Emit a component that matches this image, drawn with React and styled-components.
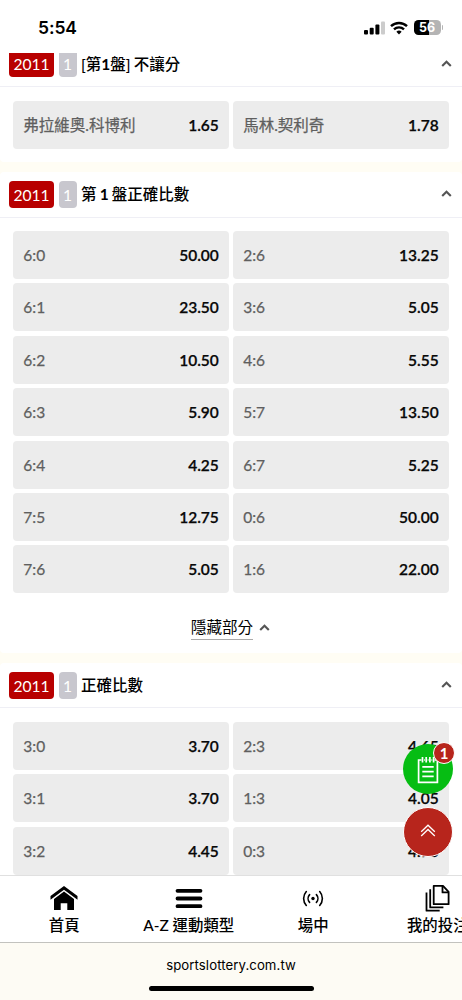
import React from 'react'
import styled, { createGlobalStyle } from 'styled-components'

const GlobalStyle = createGlobalStyle`
  * {
    box-sizing: border-box;
  }
  body {
    margin: 0;
    background: #fff;
    font-family: Lato, 'Noto Sans CJK TC', sans-serif;
    font-size: 15.6px;
    color: #000;
  }
`

const markets = [
  {
    title: '[第1盤] 不讓分',
    odds: [
      ['弗拉維奧.科博利', '1.65'], ['馬林.契利奇', '1.78']
    ]
  },
  {
    title: '第 1 盤正確比數',
    collapsible: true,
    odds: [
      ['6:0', '50.00'], ['2:6', '13.25'],
      ['6:1', '23.50'], ['3:6', '5.05'],
      ['6:2', '10.50'], ['4:6', '5.55'],
      ['6:3', '5.90'], ['5:7', '13.50'],
      ['6:4', '4.25'], ['6:7', '5.25'],
      ['7:5', '12.75'], ['0:6', '50.00'],
      ['7:6', '5.05'], ['1:6', '22.00']
    ]
  },
  {
    title: '正確比數',
    odds: [
      ['3:0', '3.70'], ['2:3', '4.65'],
      ['3:1', '3.70'], ['1:3', '4.05'],
      ['3:2', '4.45'], ['0:3', '4.70']
    ]
  }
]

const Screen = styled.div`
  position: relative;
  display: flex;
  flex-direction: column;
  width: 462px;
  height: 1000px;
  overflow: hidden;
`

const StatusBar = styled.header`
  display: flex;
  flex: none;
  justify-content: space-between;
  align-items: flex-start;
  height: 53px;
  padding: 18px 19px 0 38px;
`

const Clock = styled.span`
  font: 600 17.5px/20px Inter, sans-serif;
  letter-spacing: -0.1px;
`

const StatusIcons = styled.div`
  display: flex;
  align-items: center;
  gap: 5px;
  height: 19px;
`

const Battery = styled.div`
  display: flex;
  align-items: center;
  gap: 1px;
  margin-left: 1px;
  &:after {
    content: '';
    width: 1.5px;
    height: 5px;
    border-radius: 0 2px 2px 0;
    background: #b4b4b4;
  }
`

const BatteryLevel = styled.div`
  width: 27px;
  height: 15px;
  border-radius: 4.5px;
  background: linear-gradient(90deg, #000 56%, #b4b4b4 56%);
  color: #fff;
  font: 700 12.5px/15px Inter, sans-serif;
  text-align: center;
`

const Markets = styled.main`
  flex: 1;
  min-height: 0;
  overflow: hidden;
  background: #fffdf4;
`

const List = styled.div`
  display: flex;
  flex-direction: column;
  gap: 10px;
  margin-top: -11.5px;
`

const Section = styled.section`
  border-radius: 4px;
  background: #fff;
`

const SectionHead = styled.div`
  display: flex;
  align-items: center;
  height: 45.5px;
  padding: 0 10px 0 9px;
  border-bottom: 1px solid #efeff5;
`

const Badge = styled.span`
  width: ${({ $muted }) => ($muted ? 18 : 45)}px;
  height: 27px;
  margin-right: 4.5px;
  border-radius: 4px;
  background: ${({ $muted }) => ($muted ? '#c8c7ce' : '#b80000')};
  color: #fff;
  line-height: 28px;
  text-align: center;
`

const Title = styled.h2`
  flex: 1;
  margin: 0;
  font-size: 15.5px;
  font-weight: 500;
  line-height: 24px;
  word-spacing: -0.8px;
  & b {
    font-weight: 700;
  }
`

const OddsGrid = styled.div`
  display: grid;
  grid-template-columns: 1fr 1fr;
  gap: 4.4px;
  padding: 13.5px 13.3px;
`

const Odd = styled.button`
  display: flex;
  justify-content: space-between;
  align-items: center;
  height: 48px;
  padding: 0 10px;
  border: 0;
  border-radius: 4px;
  background: #ececec;
  color: #5f5f5f;
  font: inherit;
  font-size: 15.5px;
`

const OddName = styled.span`
  line-height: 22px;
  -webkit-text-stroke: 0.25px #5f5f5f;
`

const Price = styled.span`
  color: #080808;
  font-weight: 600;
  line-height: 22px;
  -webkit-text-stroke: 0.25px #080808;
`

const Toggle = styled.div`
  display: flex;
  justify-content: center;
  align-items: flex-start;
  gap: 6px;
  height: 46px;
  padding: 8px 1px 0 0;
`

const ToggleText = styled.span`
  height: 25px;
  border-bottom: 1px solid #aaa;
  line-height: 25px;
`

const ToggleIcon = styled.span`
  display: flex;
  align-items: center;
  height: 26px;
`

const NavBar = styled.nav`
  display: flex;
  flex: none;
  height: 68px;
  padding-left: 2px;
  overflow: hidden;
  border-top: 1px solid #e0e0e0;
  border-bottom: 1px solid #c2c2be;
  background: #fff;
`

const NavItem = styled.a`
  display: flex;
  flex: 0 0 124.5px;
  flex-direction: column;
  align-items: center;
  padding-top: 8px;
  font-size: 15.4px;
  font-weight: 500;
  line-height: 24px;
  white-space: nowrap;
  & svg {
    flex: none;
    margin-bottom: 1px;
  }
`

const AddressBar = styled.footer`
  display: flex;
  flex: none;
  flex-direction: column;
  align-items: center;
  justify-content: space-between;
  height: 57px;
  padding: 12px 0 9px;
  background: #fdfbf4;
  font: 13.2px/20px Inter, sans-serif;
  letter-spacing: 0.08px;
`

const HomeIndicator = styled.div`
  width: 165px;
  height: 5px;
  border-radius: 3px;
  background: #000;
`

const BetSlip = styled.button`
  position: absolute;
  top: 744px;
  right: 9px;
  display: flex;
  justify-content: center;
  align-items: center;
  width: 50px;
  height: 50px;
  padding: 2px 0 0;
  border: 0;
  border-radius: 50%;
  background: #06bd13;
`

const Count = styled.span`
  position: absolute;
  top: -2px;
  right: -2px;
  width: 22px;
  height: 22px;
  border: 1px solid #fff;
  border-radius: 50%;
  background: #b7251c;
  color: #fff;
  font: 700 15px/20px Lato, sans-serif;
  text-align: center;
`

const BackToTop = styled.button`
  position: absolute;
  top: 807px;
  right: 9px;
  display: flex;
  justify-content: center;
  align-items: center;
  width: 50px;
  height: 50px;
  padding: 0 0 4px;
  border: 1px solid #fff;
  border-radius: 50%;
  background: #b7251c;
`

const Chevron = () => (
  <svg width="11" height="8" viewBox="0 0 11 8" fill="none" stroke="#555" strokeWidth="2.1">
    <path d="M1.2 6.1 5.5 1.7l4.3 4.4" />
  </svg>
)

const SignalIcon = () => (
  <svg width="21" height="14" viewBox="0 0 21 14">
    <rect x="0" y="9" width="4" height="4.5" rx="1" />
    <rect x="5.7" y="6.7" width="4" height="6.8" rx="1" />
    <rect x="11.4" y="3.5" width="4" height="10" rx="1" />
    <rect x="17" y="0.5" width="4" height="13" rx="1" fill="#ccc" />
  </svg>
)

const WifiIcon = () => (
  <svg width="18" height="14" viewBox="0 0 18 14" fill="none" stroke="#000" strokeWidth="2.4">
    <path d="M1 5.2a11.5 11.5 0 0 1 16 0" />
    <path d="M4 8.4a7.2 7.2 0 0 1 10 0" />
    <path d="M6.4 10.8a3.8 3.8 0 0 1 5.2 0L9 13.5z" fill="#000" stroke="none" />
  </svg>
)

const HomeIcon = () => (
  <svg width="28" height="28" viewBox="0 0 28 28">
    <path d="M14 2 27.5 12v3.8L14 5.8.5 15.8V12z" />
    <path d="M14 7.5 24 15v11h-6.7v-6.8h-6.6V26H4V15z" />
  </svg>
)

const MenuIcon = () => (
  <svg width="28" height="28" viewBox="0 0 28 28" stroke="#000" strokeWidth="3.8" strokeLinecap="round">
    <path d="M2.5 6.8h23M2.5 14.5h23M2.5 22.2h23" />
  </svg>
)

const LiveIcon = () => (
  <svg width="28" height="28" viewBox="0 0 28 28" fill="none" stroke="#000" strokeWidth="1.6" strokeLinecap="round">
    <circle cx="14" cy="14.5" r="1.7" fill="#000" stroke="none" />
    <path d="M10.6 10.6a5.8 5.8 0 0 0 0 7.8M17.4 10.6a5.8 5.8 0 0 1 0 7.8" />
    <path d="M7.3 7.5a10.5 10.5 0 0 0 0 14M20.7 7.5a10.5 10.5 0 0 1 0 14" />
  </svg>
)

const BetsIcon = () => (
  <svg width="28" height="28" viewBox="0 0 28 28" fill="none" stroke="#000" strokeWidth="1.8" strokeLinejoin="round">
    <path d="M9.7 1.8h9.3l5.6 6v12.4H9.7z" />
    <path d="M18.5 2v6.4h6" />
    <path d="M6.2 5.2v18.2h13.2" />
    <path d="M2.5 8.4v18.3h13.2" />
  </svg>
)

const SlipIcon = () => (
  <svg width="22" height="28" viewBox="0 0 22 28" fill="none" stroke="#fff" strokeWidth="1.7">
    <path d="M4.5 4H1.6v22.4h18.8V4h-2.9" />
    <path d="M5.5 1v5.5M9.2 1v5.5M12.9 1v5.5M16.6 1v5.5M7 4h.8M10.7 4h.8M14.4 4h.8" />
    <path d="M5.3 10.8h11.4M5.3 15.6h11.4M5.3 20.4h11.4" />
  </svg>
)

const TopIcon = () => (
  <svg width="16" height="13" viewBox="0 0 16 13" fill="none" stroke="#fff" strokeWidth="1.3">
    <path d="M1.2 7.7 8 1.2l6.8 6.5M1.2 12 8 5.5l6.8 6.5" />
  </svg>
)

const navItems = [
  { label: '首頁', Icon: HomeIcon },
  { label: 'A-Z 運動類型', Icon: MenuIcon },
  { label: '場中', Icon: LiveIcon },
  { label: '我的投注', Icon: BetsIcon }
]

const Market = ({ title, odds, collapsible }) => (
  <Section>
    <SectionHead>
      <Badge>2011</Badge>
      <Badge $muted>1</Badge>
      <Title>
        {title.split(/(1)/).map((part, i) => (part === '1' ? <b key={i}>1</b> : part))}
      </Title>
      <Chevron />
    </SectionHead>
    <OddsGrid>
      {odds.map(([name, price]) => (
        <Odd key={name}>
          <OddName>{name}</OddName>
          <Price>{price}</Price>
        </Odd>
      ))}
    </OddsGrid>
    {collapsible && (
      <Toggle>
        <ToggleText>隱藏部分</ToggleText>
        <ToggleIcon><Chevron /></ToggleIcon>
      </Toggle>
    )}
  </Section>
)

const App = () => (
  <Screen>
    <GlobalStyle />
    <StatusBar>
      <Clock>5:54</Clock>
      <StatusIcons>
        <SignalIcon />
        <WifiIcon />
        <Battery>
          <BatteryLevel>56</BatteryLevel>
        </Battery>
      </StatusIcons>
    </StatusBar>
    <Markets>
      <List>
        {markets.map(market => <Market key={market.title} {...market} />)}
      </List>
    </Markets>
    <NavBar>
      {navItems.map(({ label, Icon }) => (
        <NavItem key={label}>
          <Icon />
          {label}
        </NavItem>
      ))}
    </NavBar>
    <AddressBar>
      sportslottery.com.tw
      <HomeIndicator />
    </AddressBar>
    <BetSlip>
      <SlipIcon />
      <Count>1</Count>
    </BetSlip>
    <BackToTop>
      <TopIcon />
    </BackToTop>
  </Screen>
)

export default App
